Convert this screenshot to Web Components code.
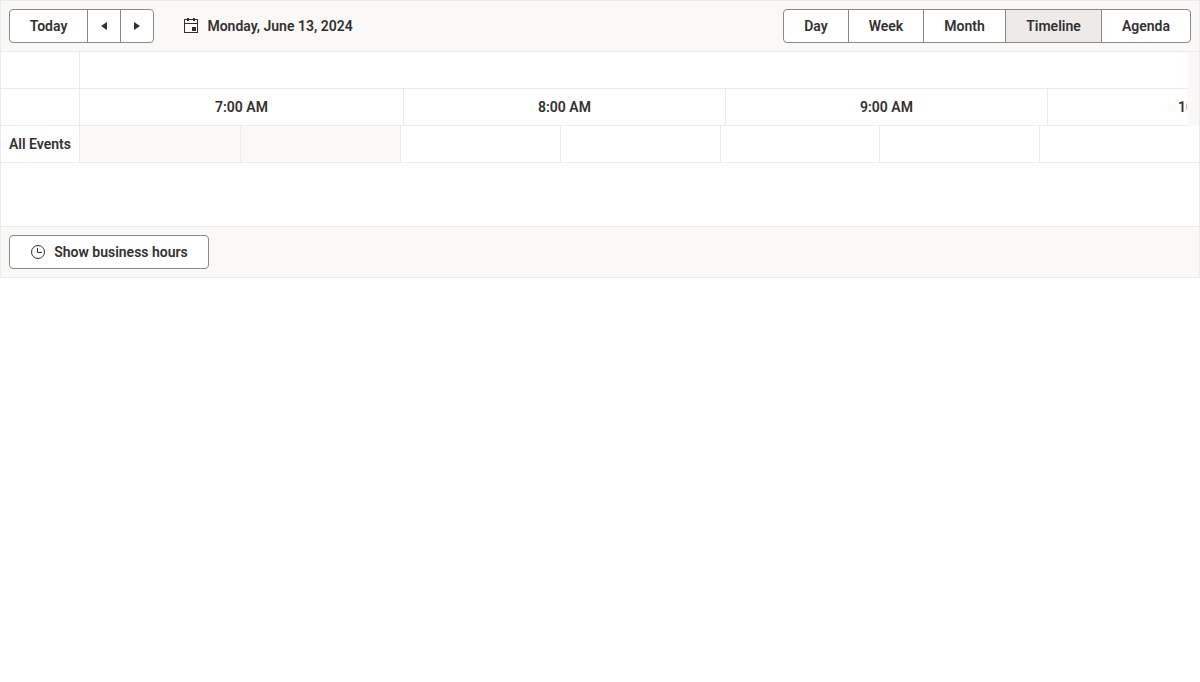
<!DOCTYPE html>
<html lang="en">
<head>
<meta charset="utf-8">
<title>Scheduler</title>
<style>
body { margin: 0; background: #fff; color: #323130; font: 600 14px/20px Roboto, "Liberation Sans", sans-serif; }
</style>
</head>
<body>
<event-scheduler></event-scheduler>
<script>
const define = (name, html) => {
  const template = document.createElement('template');
  template.innerHTML = html;
  customElements.define(name, class extends HTMLElement {
    constructor() {
      super();
      this.attachShadow({ mode: 'open' }).append(template.content.cloneNode(true));
    }
  });
};

define('button-group', `
<style>
:host { display: flex; height: 34px; box-sizing: border-box; border: 1px solid #8a8886; border-radius: 4px; overflow: hidden; background: #fff; }
</style><slot></slot>`);

define('group-button', `
<style>
:host { display: flex; align-items: center; justify-content: center; box-sizing: border-box; width: var(--w); border-right: 1px solid #8a8886; white-space: nowrap; gap: 8px; }
:host(:last-child) { border-right: 0; }
:host([selected]) { background: #edebe9; }
</style><slot></slot>`);

define('glyph-icon', `
<style>
:host { display: block; width: 16px; height: 16px; }
::slotted(svg) { display: block; }
</style><slot></slot>`);

define('scheduler-toolbar', `
<style>
:host { display: flex; align-items: center; height: 50px; padding: 0 8px; background: #faf9f8; border-bottom: 1px solid #ebebeb; }
.date { display: flex; align-items: center; gap: 8.4px; margin-left: 29px; }
.space { flex: 1; }
</style>
<button-group>
  <group-button style="--w:78px">Today</group-button>
  <group-button style="--w:33px"><glyph-icon><svg width="16" height="16" viewBox="0 0 16 16"><path d="M11 4v8L5 8z" fill="#323130"/></svg></glyph-icon></group-button>
  <group-button style="--w:32px"><glyph-icon><svg width="16" height="16" viewBox="0 0 16 16"><path d="M5 4v8l6-4z" fill="#323130"/></svg></glyph-icon></group-button>
</button-group>
<div class="date">
  <glyph-icon><svg width="16" height="16" viewBox="0 0 16 16" fill="#323130"><path fill-rule="evenodd" d="M1 1h3V0h2v1h4V0h2v1h3v14H1zM2 2v3h12V2h-2v1h-2V2H6v1H4V2zM2 6v8h12V6z"/><path d="M9 9h4v4H9z"/></svg></glyph-icon>
  <span>Monday, June 13, 2024</span>
</div>
<div class="space"></div>
<button-group>
  <group-button style="--w:65px">Day</group-button>
  <group-button style="--w:75px">Week</group-button>
  <group-button style="--w:82px">Month</group-button>
  <group-button style="--w:96px" selected>Timeline</group-button>
  <group-button style="--w:88px">Agenda</group-button>
</button-group>`);

define('timeline-row', `
<style>
:host { display: flex; height: 37px; box-sizing: border-box; overflow: hidden; }
</style><slot></slot>`);

define('timeline-cell', `
<style>
:host { display: flex; flex: none; align-items: center; justify-content: center; box-sizing: border-box; width: var(--w); border-right: 1px solid #ebebeb; border-bottom: 1px solid #ebebeb; white-space: nowrap; }
:host([off]) { background: #faf9f8; }
:host([gutter]) { background: #faf9f8; border: 0; }
:host([fill]) { flex: 1; min-width: 0; border-right: 0; }
:host([clip]) { justify-content: flex-start; overflow: hidden; padding-left: 130px; }
</style><slot></slot>`);

define('timeline-view', `
<style>:host { display: block; height: 174px; }</style>
<timeline-row>
  <timeline-cell style="--w:79px"></timeline-cell>
  <timeline-cell fill></timeline-cell>
  <timeline-cell gutter style="--w:12px"></timeline-cell>
</timeline-row>
<timeline-row>
  <timeline-cell style="--w:79px"></timeline-cell>
  <timeline-cell style="--w:324px">7:00 AM</timeline-cell>
  <timeline-cell style="--w:322px">8:00 AM</timeline-cell>
  <timeline-cell style="--w:322px">9:00 AM</timeline-cell>
  <timeline-cell fill clip>10:00 AM</timeline-cell>
  <timeline-cell gutter style="--w:12px"></timeline-cell>
</timeline-row>
<timeline-row>
  <timeline-cell style="--w:79px">All Events</timeline-cell>
  <timeline-cell off style="--w:161px"></timeline-cell>
  <timeline-cell off style="--w:160px"></timeline-cell>
  <timeline-cell style="--w:160px"></timeline-cell>
  <timeline-cell style="--w:160px"></timeline-cell>
  <timeline-cell style="--w:159px"></timeline-cell>
  <timeline-cell style="--w:160px"></timeline-cell>
  <timeline-cell fill></timeline-cell>
</timeline-row>`);

define('scheduler-footer', `
<style>
:host { display: flex; align-items: center; height: 50px; padding: 0 8px; background: #faf9f8; border-top: 1px solid #ebebeb; }
</style>
<button-group>
  <group-button style="--w:198px"><glyph-icon><svg width="16" height="16" viewBox="0 0 16 16" fill="none" stroke="#323130"><circle cx="8" cy="8" r="6.5"/><path d="M7.5 4v4.5H12"/></svg></glyph-icon><span>Show business hours</span></group-button>
</button-group>`);

define('event-scheduler', `
<style>:host { display: block; box-sizing: border-box; border: 1px solid #ebebeb; }</style>
<scheduler-toolbar></scheduler-toolbar>
<timeline-view></timeline-view>
<scheduler-footer></scheduler-footer>`);
</script>
</body>
</html>
